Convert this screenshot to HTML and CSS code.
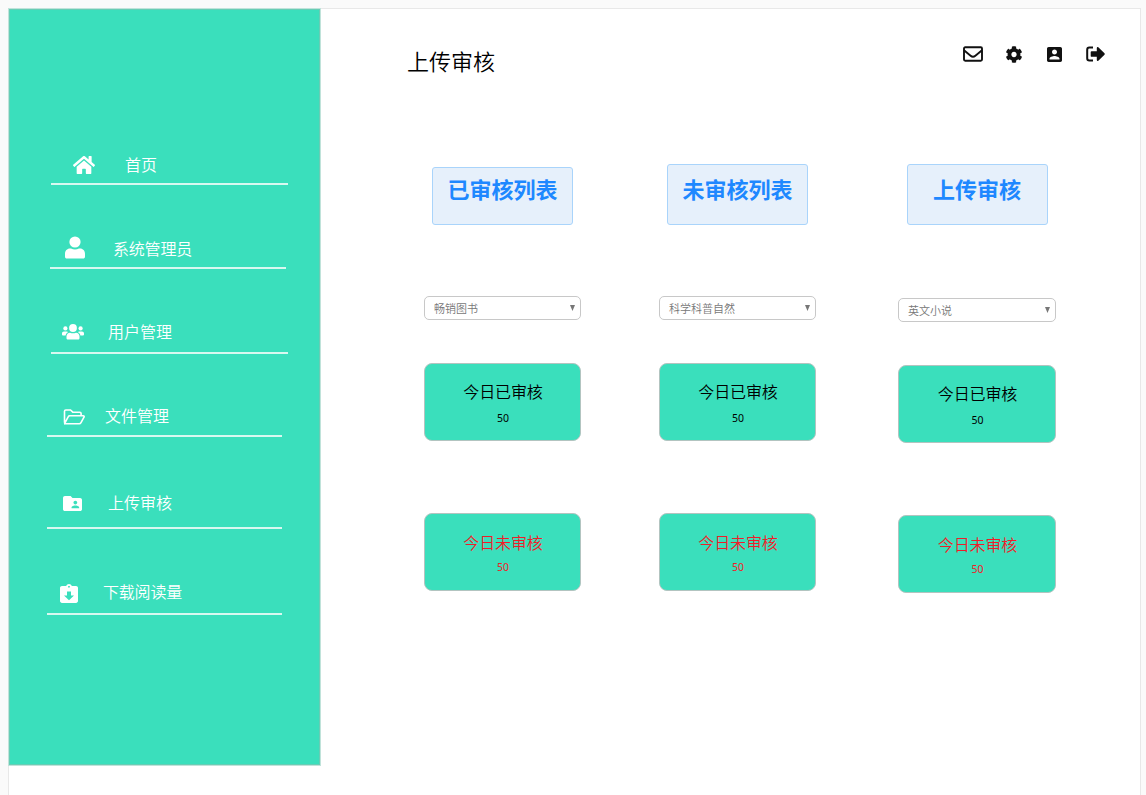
FILE: index.html
```html
<!DOCTYPE html>
<html lang="zh-CN">
<head>
<meta charset="utf-8">
<title>上传审核</title>
<link rel="stylesheet" href="styles.css">
</head>
<body>
<div class="page">
  <aside class="sidebar">
    <nav class="nav">
      <a class="nav-item home">
        <svg class="icon" width="22" height="18" viewBox="0 32 576 448" preserveAspectRatio="none"><path d="M280.37 148.26L96 300.11V464a16 16 0 0 0 16 16l112.06-.29a16 16 0 0 0 15.92-16V368a16 16 0 0 1 16-16h64a16 16 0 0 1 16 16v95.64a16 16 0 0 0 16 16.05L464 480a16 16 0 0 0 16-16V300L295.67 148.26a12.19 12.19 0 0 0-15.3 0zM571.6 251.47L488 182.56V44.05a12 12 0 0 0-12-12h-56a12 12 0 0 0-12 12v72.61L318.47 43a48 48 0 0 0-61 0L4.34 251.47a12 12 0 0 0-1.6 16.9l25.5 31A12 12 0 0 0 45.15 301l235.22-193.74a12.19 12.19 0 0 1 15.3 0L530.9 301a12 12 0 0 0 16.9-1.6l25.5-31a12 12 0 0 0-1.7-16.93z"/></svg>
        <span class="label">首页</span>
      </a>
      <a class="nav-item admin">
        <svg class="icon" width="20" height="23" viewBox="0 0 20 23"><circle cx="10" cy="6" r="5.6"/><path d="M5 12.6h1q4 1.8 8 0h1c3 0 5 2.400 5 5.400v2.800c0 1-.8 1.800-1.800 1.800H1.800C.8 22.600 0 21.800 0 20.800V18c0-3 2-5.400 5-5.400z"/></svg>
        <span class="label">系统管理员</span>
      </a>
      <a class="nav-item users">
        <svg class="icon" width="22" height="16" viewBox="0 0 22 16"><circle cx="11" cy="4" r="3.900"/><circle cx="3.400" cy="4.400" r="2.100"/><circle cx="18.600" cy="4.400" r="2.100"/><path d="M8 8.700q3 1.300 6 0c2 0 3.500 1.500 3.500 3.600V14c0 1-.6 1.600-1.500 1.600H6c-.9 0-1.500-.6-1.500-1.600v-1.700c0-2.100 1.500-3.600 3.500-3.600zM2 7.400h2.600c.7 0 1.200.2 1.600.6-1.500.9-2.400 2-2.600 3.400H.9c-.5 0-.9-.4-.9-.9v-1C0 8.300.8 7.400 2 7.400zM20 7.400h-2.600c-.7 0-1.200.2-1.600.6 1.500.9 2.400 2 2.600 3.400h2.700c.5 0 .9-.4.9-.9v-1c0-1.200-.8-2.100-2-2.100z"/></svg>
        <span class="label">用户管理</span>
      </a>
      <a class="nav-item files">
        <svg class="icon line" width="22" height="16" viewBox="0 0 22 16"><path d="M1.500 13.500V2.300c0-.8.5-1.300 1.300-1.300h4.700l2.300 2.200h7c.8 0 1.300.5 1.300 1.300v2.200M1.700 14.300l3.600-6.600c.3-.6.8-.9 1.400-.9h13.500c.8 0 1.200.7.8 1.400l-3 5.500c-.4.7-.9 1.100-1.700 1.100H2.500c-.6 0-1-.4-1-1z"/></svg>
        <span class="label">文件管理</span>
      </a>
      <a class="nav-item review">
        <svg class="icon" width="19" height="15" viewBox="2 4 20 16" preserveAspectRatio="none"><path fill-rule="evenodd" d="M20 6h-8l-2-2H4c-1.100 0-1.990.9-1.990 2L2 18c0 1.100.9 2 2 2h16c1.100 0 2-.9 2-2V8c0-1.100-.9-2-2-2zm-5 3c1.100 0 2 .9 2 2s-.9 2-2 2-2-.9-2-2 .9-2 2-2zm4 8h-8v-1c0-1.330 2.670-2 4-2s4 .67 4 2v1z"/></svg>
        <span class="label">上传审核</span>
      </a>
      <a class="nav-item downloads">
        <svg class="icon" width="18" height="19" viewBox="3 1 18 20" preserveAspectRatio="none"><path fill-rule="evenodd" d="M19 3h-4.180C14.400 1.840 13.300 1 12 1c-1.300 0-2.400.84-2.820 2H5c-1.100 0-2 .9-2 2v14c0 1.100.9 2 2 2h14c1.100 0 2-.9 2-2V5c0-1.100-.9-2-2-2zm-7 0c.55 0 1 .45 1 1s-.45 1-1 1-1-.45-1-1 .45-1 1-1zm0 15l-5-5h3V9h4v4h3l-5 5z"/></svg>
        <span class="label">下载阅读量</span>
      </a>
    </nav>
  </aside>

  <main class="main">
    <header class="header">
      <h1 class="title">上传审核</h1>
      <div class="tools">
        <svg class="tool" width="20" height="16" viewBox="0 0 20 16" fill="none" stroke="#111" stroke-width="1.900"><rect x="1" y="1.200" width="18" height="13.600" rx="1.200"/><path d="M1 4.300l6.600 5.400c1.500 1.200 3.300 1.200 4.800 0L19 4.300"/></svg>
        <svg class="tool gear" width="16" height="17" viewBox="16 8 480 496" fill="#111"><path d="M487.400 315.700l-42.600-24.600c4.300-23.200 4.300-47 0-70.200l42.600-24.600c4.900-2.800 7.100-8.600 5.500-14-11.100-35.600-30-67.800-54.700-94.600-3.800-4.100-10-5.100-14.800-2.300L380.800 110c-17.900-15.400-38.500-27.300-60.800-35.100V25.800c0-5.600-3.900-10.500-9.400-11.700-36.700-8.200-74.300-7.800-109.200 0-5.500 1.200-9.400 6.100-9.400 11.700V75c-22.200 7.900-42.800 19.800-60.800 35.100L88.700 85.500c-4.900-2.800-11-1.900-14.800 2.300-24.700 26.700-43.600 58.900-54.700 94.600-1.700 5.400.6 11.200 5.500 14L67.300 221c-4.300 23.200-4.300 47 0 70.200l-42.600 24.600c-4.900 2.800-7.100 8.600-5.500 14 11.100 35.600 30 67.800 54.700 94.600 3.800 4.100 10 5.100 14.800 2.300l42.600-24.600c17.900 15.400 38.500 27.300 60.800 35.100v49.200c0 5.600 3.900 10.500 9.400 11.700 36.700 8.200 74.300 7.800 109.200 0 5.500-1.200 9.400-6.100 9.400-11.700v-49.200c22.200-7.900 42.800-19.800 60.800-35.100l42.600 24.600c4.900 2.800 11 1.900 14.800-2.300 24.700-26.700 43.600-58.900 54.700-94.600 1.500-5.500-.7-11.300-5.600-14.100zM256 336c-44.100 0-80-35.900-80-80s35.900-80 80-80 80 35.900 80 80-35.900 80-80 80z"/></svg>
        <svg class="tool contact" width="15" height="15" viewBox="3 3 18 18" fill="#111"><path fill-rule="evenodd" d="M3 5v14c0 1.100.89 2 2 2h14c1.100 0 2-.9 2-2V5c0-1.100-.9-2-2-2H5c-1.110 0-2 .9-2 2zm12 4c0 1.660-1.340 3-3 3s-3-1.340-3-3 1.340-3 3-3 3 1.340 3 3zm-9 8c0-2 4-3.100 6-3.100s6 1.100 6 3.100v1H6v-1z"/></svg>
        <svg class="tool exit" width="20" height="16" viewBox="0 0 20 16"><path d="M7 1.500H3.400C2 1.500 1.200 2.300 1.200 3.700v8.600c0 1.400.8 2.200 2.200 2.200H7" fill="none" stroke="#111" stroke-width="2"/><path d="M5.600 5.200h5.200V2c0-.9.9-1.300 1.500-.7l6.200 6c.4.400.4 1 0 1.400l-6.200 6c-.6.600-1.500.2-1.500-.7v-3.200H5.600c-.5 0-.9-.4-.9-.9V6.100c0-.5.4-.9.9-.9z" fill="#111"/></svg>
      </div>
    </header>

    <div class="columns">
      <section class="column first">
        <button class="tab">已审核列表</button>
        <div class="select"><span>畅销图书</span><i class="caret"></i></div>
        <div class="card"><h2>今日已审核</h2><p>50</p></div>
        <div class="card pending"><h2>今日未审核</h2><p>50</p></div>
      </section>
      <section class="column second">
        <button class="tab">未审核列表</button>
        <div class="select"><span>科学科普自然</span><i class="caret"></i></div>
        <div class="card"><h2>今日已审核</h2><p>50</p></div>
        <div class="card pending"><h2>今日未审核</h2><p>50</p></div>
      </section>
      <section class="column third">
        <button class="tab">上传审核</button>
        <div class="select"><span>英文小说</span><i class="caret"></i></div>
        <div class="card"><h2>今日已审核</h2><p>50</p></div>
        <div class="card pending"><h2>今日未审核</h2><p>50</p></div>
      </section>
    </div>
  </main>
</div>
</body>
</html>
```
FILE: styles.css
```css
* { box-sizing: border-box; }

body {
  margin: 0;
  height: 795px;
  overflow: hidden;
  padding: 8px 5px 0 8px;
  background: #fafafa;
  color: #000;
  font-family: "Noto Sans CJK SC", "Noto Sans", sans-serif;
}

h1, h2, p { margin: 0; font-weight: 350; }

.page {
  display: flex;
  align-items: flex-start;
  height: 787px;
  background: #fff;
  border: 1px solid #e8e8e8;
  border-bottom: 0;
}

/* Sidebar */
.sidebar {
  flex: none;
  width: 313px;
  height: 758px;
  margin: -1px 0 0 -1px;
  padding-top: 131px;
  background: #3adfbc;
  border: 1px solid #c0e3da;
  box-shadow: inset 0 0 0 1px #68cdb5;
}

.nav { display: flex; flex-direction: column; }

.nav-item {
  display: flex;
  align-items: flex-end;
  width: 235px;
  margin-left: 38px;
  border-bottom: 2px solid #d8f8f0;
  color: #fff;
}

.icon { flex: none; fill: #fff; }
.icon.line { fill: none; stroke: #fff; stroke-width: 1.6; }
.label { font-size: 16px; line-height: 20px; font-weight: 350; white-space: nowrap; }

.home { width: 237px; height: 45px; margin-left: 42px; padding-left: 22px; gap: 30px; padding-bottom: 9px; }
.admin { width: 236px; height: 84px; margin-left: 41px; padding-left: 15px; gap: 28px; padding-bottom: 8px; }
.admin .label { margin-bottom: 1px; letter-spacing: -0.2px; }
.users { width: 237px; height: 85px; margin-left: 42px; padding-left: 11px; gap: 24px; padding-bottom: 11px; }
.users .icon { margin-bottom: 1px; }
.files { height: 83px; padding-left: 16px; gap: 20px; padding-bottom: 10px; }
.review { height: 92px; padding-left: 16px; gap: 26px; padding-bottom: 14px; }
.review .icon { margin-bottom: 2px; }
.review .label { margin-bottom: 1px; }
.downloads { height: 86px; padding-left: 13px; gap: 25px; padding-bottom: 10px; }
.downloads .label { margin-bottom: 2px; letter-spacing: -0.2px; }

/* Main area */
.main { flex: 1; }

.header {
  display: flex;
  justify-content: space-between;
  align-items: flex-start;
  height: 155px;
  padding: 36px 34px 0 86px;
}

.title { font-size: 22px; line-height: 30px; }

.tools { display: flex; align-items: center; height: 18px; }
.gear { margin-left: 23px; }
.contact { margin-left: 25px; }
.exit { margin-left: 24px; }

.columns { display: flex; padding-left: 103px; }
.column { display: flex; flex-direction: column; align-items: center; width: 157px; }
.second { margin-left: 78px; }
.third { width: 158px; margin-left: 82px; }

.tab {
  width: 141px;
  height: 61px;
  padding: 0 0 13px;
  background: #e6f0fb;
  border: 1px solid #a9d4fb;
  border-radius: 3px;
  color: #1e88ff;
  font: 700 22px/30px "Noto Sans CJK SC", sans-serif;
}
.first .tab { height: 58px; margin-top: 3px; padding-bottom: 16px; }

.select {
  display: flex;
  justify-content: space-between;
  width: 100%;
  height: 24px;
  margin-top: 71px;
  padding: 0 5px 0 9px;
  border: 1px solid #c8c8c8;
  border-radius: 5px;
  background: #fff;
  color: #777;
  font-size: 11px;
  font-weight: 350;
  line-height: 23px;
}
.third .select { margin-top: 73px; line-height: 22px; }

.caret {
  width: 5px;
  height: 6px;
  margin-top: 8px;
  background: #777;
  clip-path: polygon(0 0, 100% 0, 50% 100%);
}

.card {
  width: 100%;
  height: 78px;
  margin-top: 43px;
  padding: 16px 0 0 1px;
  background: #3adfbc;
  border: 1px solid #b2c4c0;
  border-radius: 8px;
  text-align: center;
}
.card h2 { font-size: 16px; line-height: 22px; letter-spacing: -0.1px; }
.card p { margin-top: 8px; font: 400 10.5px/16px "Noto Sans", sans-serif; }
.pending { margin-top: 72px; padding-top: 17px; color: #f01c28; }
.pending p { margin-top: 6px; }
```
